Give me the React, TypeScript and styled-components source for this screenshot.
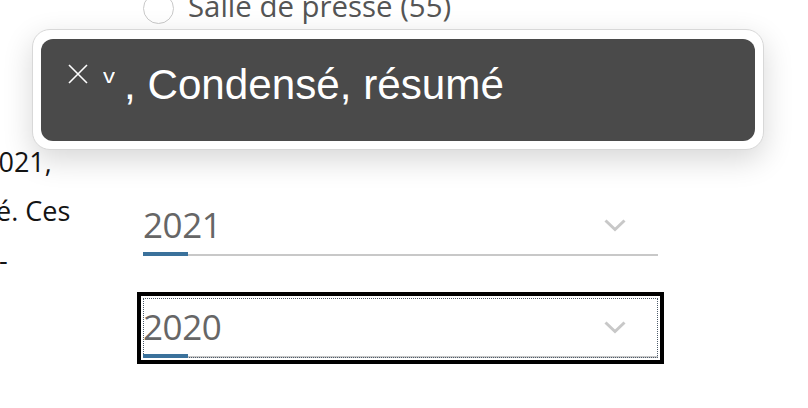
import React from "react";
import styled, { createGlobalStyle } from "styled-components";

const Global = createGlobalStyle`
  html, body { margin: 0; padding: 0; background: #ffffff; }
  body { width: 808px; height: 408px; overflow: hidden; font-family: "Open Sans", "Noto Sans", sans-serif; }
`;

const Page = styled.div`
  position: relative;
  display: flex;
  width: 808px;
  height: 408px;
  overflow: hidden;
`;

const LeftCol = styled.div`
  flex: none;
  width: 143px;
  overflow: hidden;
  padding-top: 137px;
  box-sizing: border-box;
  font-size: 27px;
  line-height: 49px;
  color: #141414;
`;

const Line = styled.div<{ $shift: number }>`
  white-space: nowrap;
  margin-left: ${(p) => p.$shift}px;
`;

const RightCol = styled.div`
  flex: none;
  width: 515px;
  margin-top: -13px;
  display: flex;
  flex-direction: column;
`;

const RadioRow = styled.label`
  display: flex;
  align-items: center;
  gap: 14px;
  height: 38px;
  font-size: 29.4px;
  line-height: 38px;
  color: #555555;
`;

const RadioCircle = styled.span`
  flex: none;
  width: 29px;
  height: 29px;
  margin-top: 4px;
  border: 1px solid #c9c9c9;
  border-radius: 50%;
  background: #fff;
`;

const Selects = styled.div`
  margin-top: 171px;
  display: flex;
  flex-direction: column;
  gap: 42px;
`;

const SelectBox = styled.div<{ $focused?: boolean }>`
  position: relative;
  display: flex;
  justify-content: space-between;
  align-items: flex-start;
  height: 60px;
  box-sizing: border-box;
  padding-top: 5px;
  border-bottom: 2px solid #c8c8c8;
  font-size: 35px;
  letter-spacing: -0.4px;
  line-height: 48px;
  color: #666666;
  ${(p) =>
    p.$focused &&
    `
    outline: 1px dotted #4d5b6a;
    outline-offset: -1px;
    box-shadow: 0 0 0 2px #ffffff, 0 0 0 6px #000000;
  `}
  &::after {
    content: "";
    position: absolute;
    left: 0;
    bottom: -2px;
    width: 45px;
    height: 4px;
    background: #3a719b;
  }
`;

const Chevron = styled.svg`
  flex: none;
  margin-top: 18px;
  margin-right: 32px;
`;

const Tooltip = styled.div`
  position: absolute;
  left: 32px;
  top: 29px;
  width: 732px;
  height: 121px;
  box-sizing: border-box;
  padding: 9px 8px 8px;
  background: #ffffff;
  border: 1px solid #d8d8d8;
  border-radius: 18px;
  box-shadow: 0 10px 30px rgba(0, 0, 0, 0.16);
`;

const TipInner = styled.div`
  display: flex;
  align-items: flex-start;
  height: 100%;
  box-sizing: border-box;
  padding: 22px 26px 0;
  background: #4a4a4a;
  border-radius: 12px;
  color: #ffffff;
  font-family: "Liberation Sans", Arial, sans-serif;
`;

const CloseIcon = styled.svg`
  flex: none;
  margin-top: 3px;
`;

const Caret = styled.span`
  flex: none;
  margin-left: 15px;
  margin-top: 5px;
  font-size: 20px;
  line-height: 1;
  transform: scaleX(1.2);
`;

const TipLabel = styled.span`
  margin-left: 10px;
  font-size: 42.2px;
  line-height: 48px;
  white-space: nowrap;
`;

const ChevronIcon = () => (
  <Chevron width="22" height="13" viewBox="0 0 22 13">
    <polyline points="1.5,1.5 11,10.5 20.5,1.5" fill="none" stroke="#c8c8c8" strokeWidth="3" />
  </Chevron>
);

const Select = ({ value, focused }: { value: string; focused?: boolean }) => (
  <SelectBox $focused={focused}>
    <span>{value}</span>
    <ChevronIcon />
  </SelectBox>
);

export default function App() {
  return (
    <>
      <Global />
      <Page>
        <LeftCol>
          <Line $shift={-17}>2021,</Line>
          <Line $shift={-4}>é. Ces</Line>
          <Line $shift={-1}>-</Line>
        </LeftCol>
        <RightCol>
          <RadioRow>
            <RadioCircle />
            Salle de presse (55)
          </RadioRow>
          <Selects>
            <Select value="2021" />
            <Select value="2020" focused />
          </Selects>
        </RightCol>
        <Tooltip>
          <TipInner>
            <CloseIcon width="22" height="20" viewBox="0 0 22 20">
              <path d="M2 1 L20 19 M20 1 L2 19" stroke="#ffffff" strokeWidth="1.6" fill="none" />
            </CloseIcon>
            <Caret>v</Caret>
            <TipLabel>, Condensé, résumé</TipLabel>
          </TipInner>
        </Tooltip>
      </Page>
    </>
  );
}
